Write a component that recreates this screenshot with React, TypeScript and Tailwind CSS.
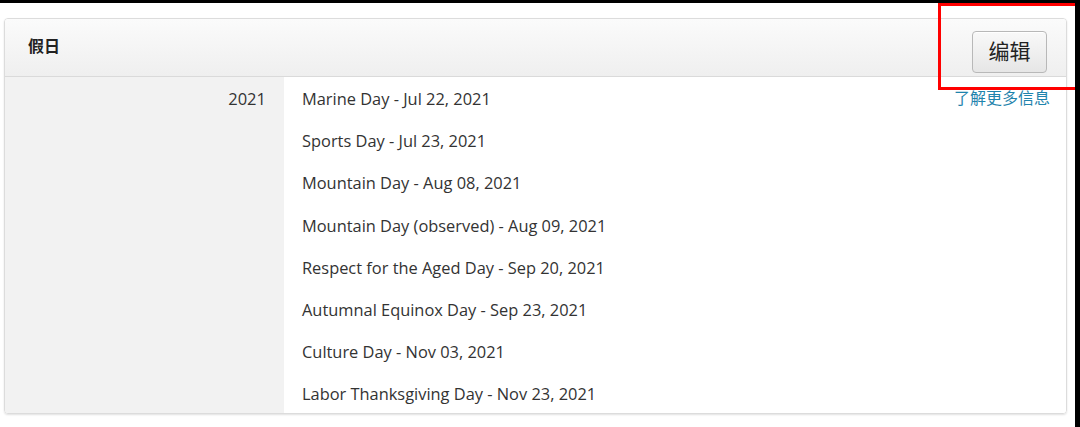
import React from 'react';

const holidays = [
  'Marine Day - Jul 22, 2021',
  'Sports Day - Jul 23, 2021',
  'Mountain Day - Aug 08, 2021',
  'Mountain Day (observed) - Aug 09, 2021',
  'Respect for the Aged Day - Sep 20, 2021',
  'Autumnal Equinox Day - Sep 23, 2021',
  'Culture Day - Nov 03, 2021',
  'Labor Thanksgiving Day - Nov 23, 2021',
];

const font = { fontFamily: '"Open Sans", "Noto Sans CJK SC", sans-serif' };

export default function App() {
  return (
    <div
      className="relative w-[1080px] h-[427px] bg-white border-t-[3px] border-r-[5px] border-black overflow-hidden"
      style={font}
    >
      <div className="ml-[4px] mt-[15px] w-[1063px] rounded-[4px] border border-[#dcdcdc] shadow-[0_1px_2px_rgba(0,0,0,0.12)] overflow-hidden">
        {/* header */}
        <div className="flex items-center justify-between h-[58px] pl-[23px] pr-[19px] bg-gradient-to-b from-[#fbfbfb] to-[#efefef] border-b border-[#dadada]">
          <h2 className="pb-[4px] text-[16px] font-bold text-[#222]">假日</h2>
          <button className="mt-[8px] w-[75px] h-[42px] rounded-[4px] border border-[#b8b8b8] bg-gradient-to-b from-[#f9f9f9] to-[#e6e6e6] shadow-[inset_0_1px_0_#fff] text-[21px] text-[#222]">
            编辑
          </button>
        </div>
        {/* body */}
        <div className="flex h-[336px] overflow-hidden">
          <div className="w-[279px] shrink-0 bg-[#f2f2f2] pr-[18px] pt-[1px] text-right text-[16.5px] text-[#333]">
            <div className="h-[42px] leading-[42px]">2021</div>
          </div>
          <div className="flex-1 flex justify-between pl-[18px] pr-[16px] pt-[1px] bg-white">
            <ul className="text-[16.4px] text-[#333]">
              {holidays.map((h) => (
                <li key={h} className="h-[42.2px] leading-[42px]">
                  {h}
                </li>
              ))}
            </ul>
            <a className="h-[40px] leading-[40px] text-[16px] text-[#1f84ad]" href="#">
              了解更多信息
            </a>
          </div>
        </div>
      </div>
      {/* annotation box */}
      <div className="absolute left-[938px] top-0 w-[140px] h-[87px] border-[3px] border-[#ff0000]" />
    </div>
  );
}
